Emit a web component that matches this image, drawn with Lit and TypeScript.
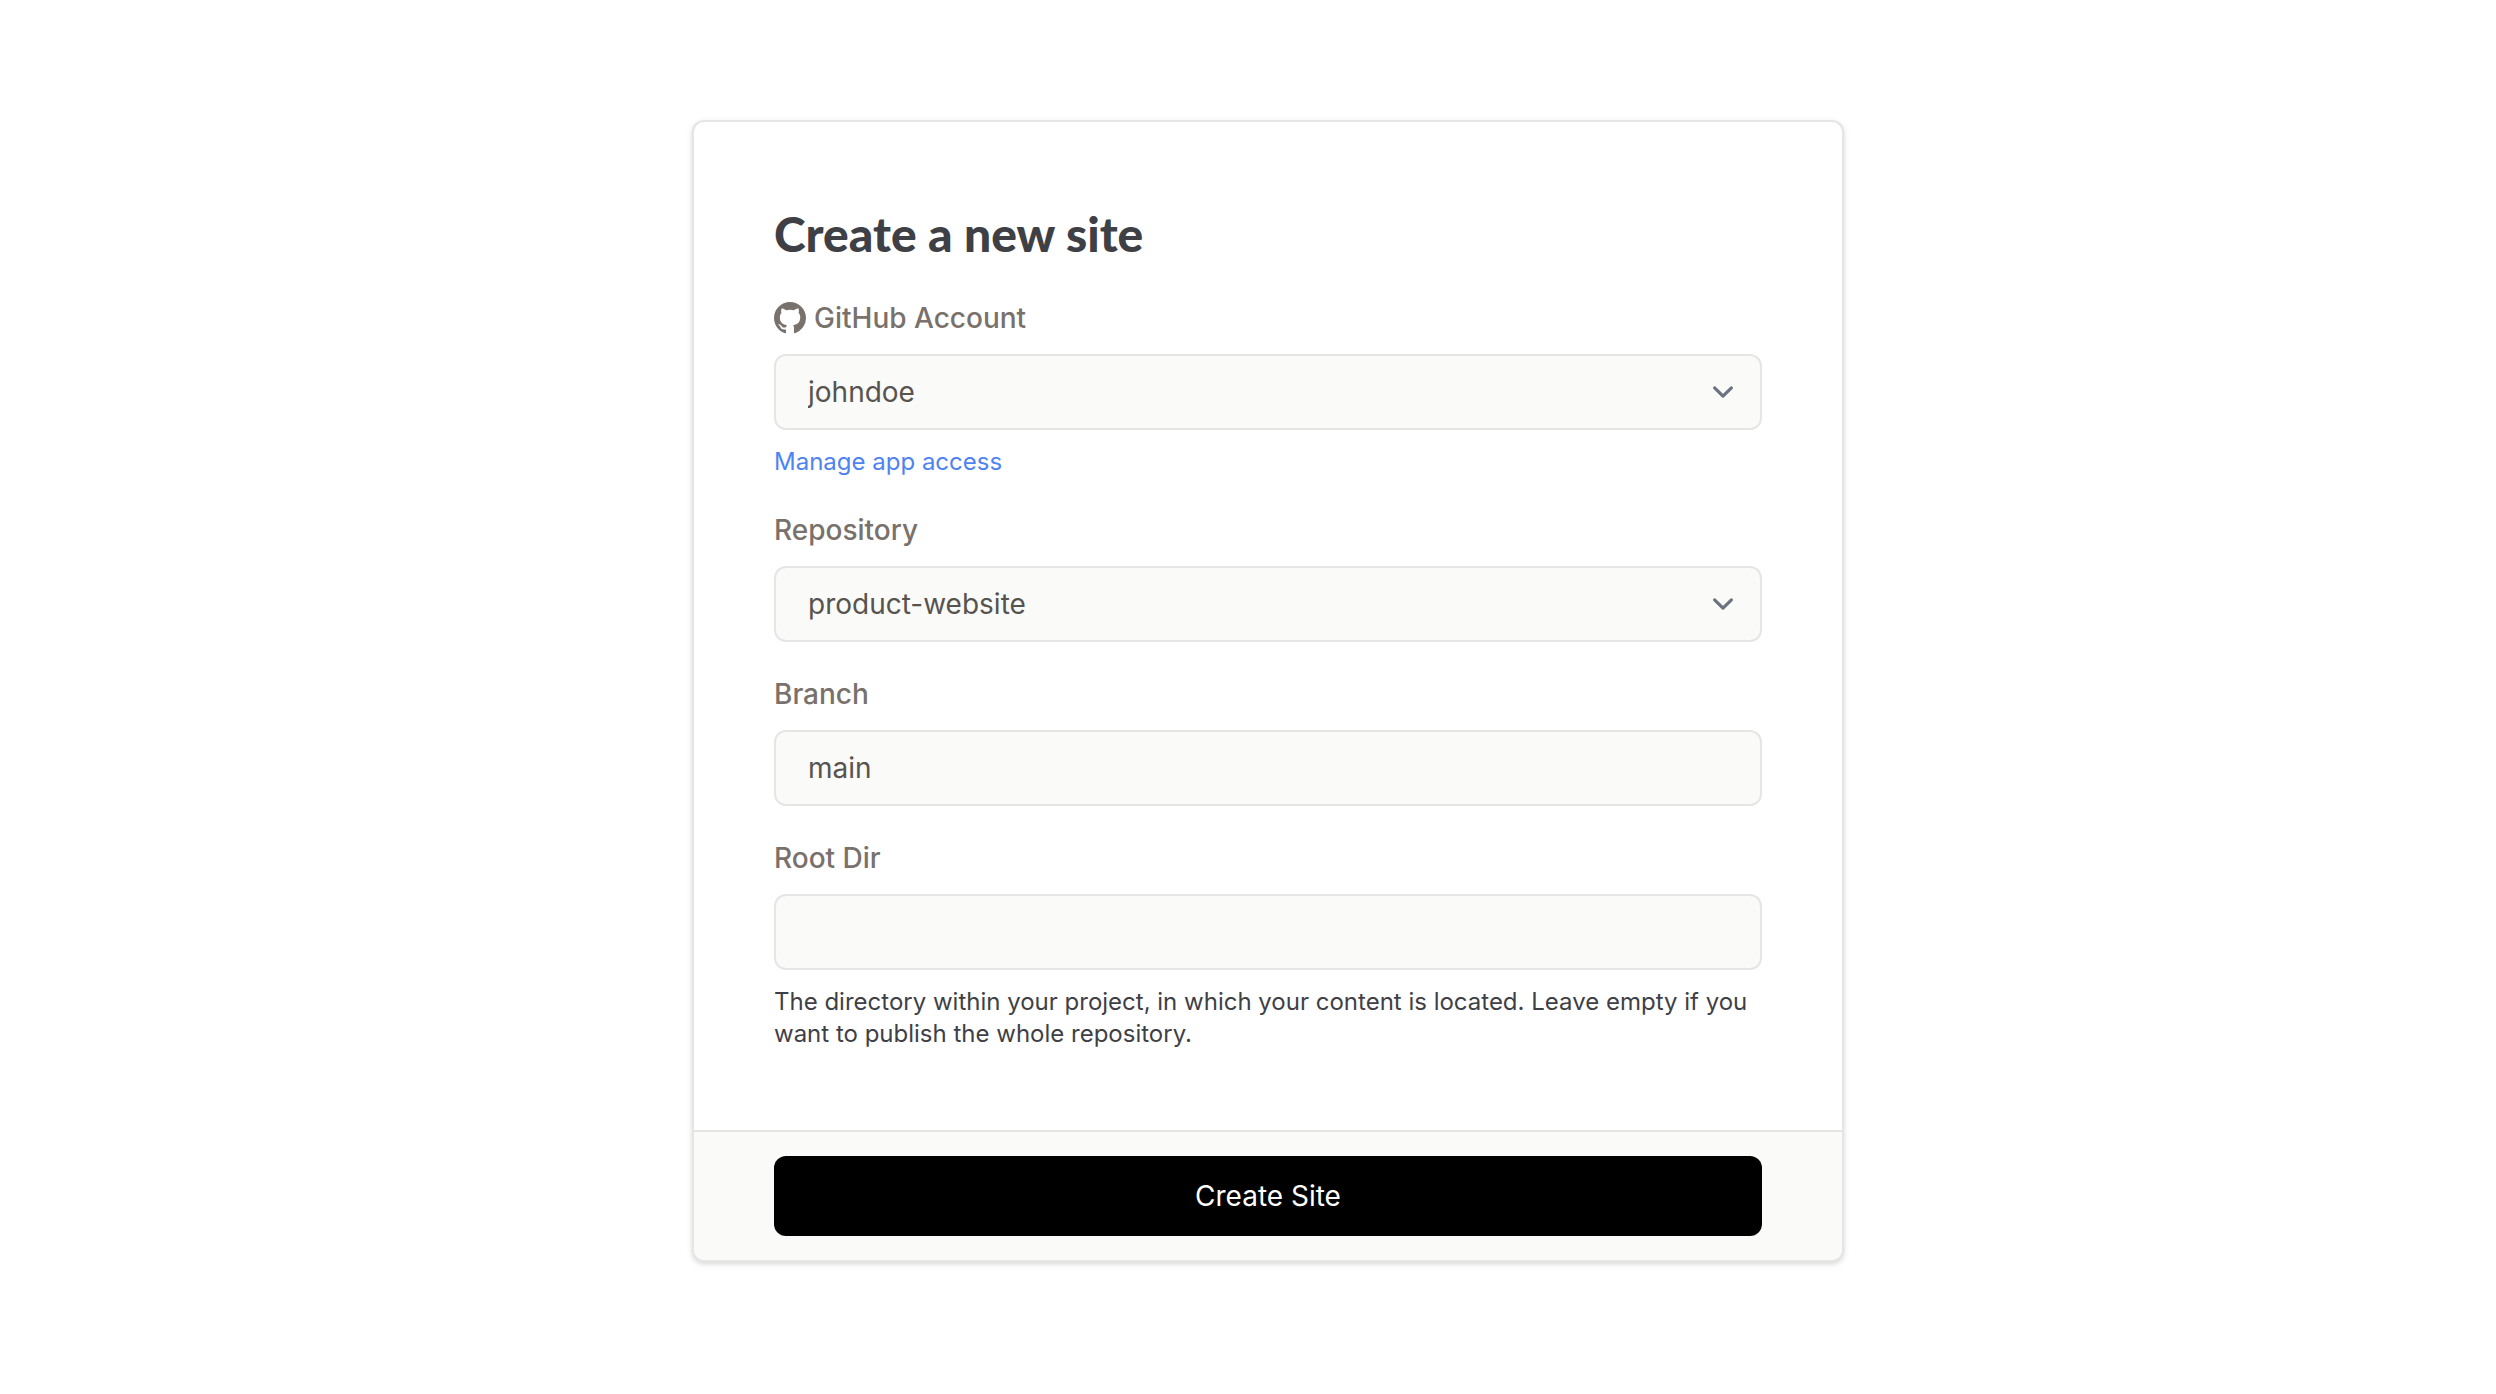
import { LitElement, html, css, svg } from "lit";
import { customElement } from "lit/decorators.js";

const chevron = html`<svg class="chevron" viewBox="0 0 20 20" fill="none" aria-hidden="true">
  ${svg`<path d="M6 8l4 4 4-4" stroke="currentColor" stroke-width="1.5" stroke-linecap="round" stroke-linejoin="round" />`}
</svg>`;

const githubMark = html`<svg class="mark" viewBox="0 0 16 16" fill="currentColor" aria-hidden="true">
  ${svg`<path d="M8 0C3.58 0 0 3.58 0 8c0 3.54 2.29 6.53 5.47 7.59.4.07.55-.17.55-.38 0-.19-.01-.82-.01-1.49-2.01.37-2.53-.49-2.69-.94-.09-.23-.48-.94-.82-1.13-.28-.15-.68-.52-.01-.53.63-.01 1.08.58 1.23.82.72 1.21 1.87.87 2.33.66.07-.52.28-.87.51-1.07-1.78-.2-3.64-.89-3.64-3.95 0-.87.31-1.59.82-2.15-.08-.2-.36-1.02.08-2.12 0 0 .67-.21 2.2.82.64-.18 1.32-.27 2-.27s1.36.09 2 .27c1.53-1.04 2.2-.82 2.2-.82.44 1.1.16 1.92.08 2.12.51.56.82 1.27.82 2.15 0 3.07-1.87 3.75-3.65 3.95.29.25.54.73.54 1.48 0 1.07-.01 1.93-.01 2.2 0 .21.15.46.55.38A8.01 8.01 0 0 0 16 8c0-4.42-3.58-8-8-8z" />`}
</svg>`;

@customElement("app-root")
export class AppRoot extends LitElement {
  static styles = css`
    :host {
      display: block;
      min-height: 100vh;
      box-sizing: border-box;
      padding: 120px 0 120px 40px;
      background: #ffffff;
      color: #3f3f46;
      font-family: Inter, "Liberation Sans", sans-serif;
      font-size: 28px;
      line-height: 40px;
    }
    * {
      box-sizing: border-box;
    }
    .card {
      max-width: 1152px;
      margin: 0 auto;
      border: 2px solid #e5e5e4;
      border-radius: 12px;
      background: #ffffff;
      box-shadow: 0 2px 6px rgba(0, 0, 0, 0.1), 0 2px 4px rgba(0, 0, 0, 0.06);
    }
    .body {
      display: flex;
      flex-direction: column;
      gap: 32px;
      padding: 80px;
    }
    .title {
      margin: 0;
      font-family: Lato, Inter, sans-serif;
      font-size: 48px;
      font-weight: 900;
      line-height: 64px;
    }
    .field {
      display: flex;
      flex-direction: column;
      gap: 16px;
    }
    .label {
      display: flex;
      align-items: center;
      gap: 8px;
      color: #78716c;
      font-weight: 500;
    }
    .mark {
      width: 32px;
      height: 32px;
    }
    .picker {
      display: grid;
      align-items: center;
    }
    .picker > * {
      grid-area: 1 / 1;
    }
    .control {
      appearance: none;
      width: 100%;
      height: 76px;
      margin: 0;
      padding: 0 32px;
      border: 2px solid #e5e5e4;
      border-radius: 12px;
      background: #fafaf9;
      color: #57534e;
      font: inherit;
    }
    .chevron {
      justify-self: end;
      width: 42px;
      height: 42px;
      margin-right: 18px;
      color: #6b7280;
      pointer-events: none;
    }
    .note {
      margin: 0;
      font-size: 24px;
      line-height: 32px;
    }
    .link {
      color: #4f83f1;
      text-decoration: none;
    }
    .footer {
      padding: 24px 80px;
      border-top: 2px solid #e5e5e4;
      border-radius: 0 0 12px 12px;
      background: #fafaf9;
    }
    .submit {
      width: 100%;
      height: 80px;
      border: 0;
      border-radius: 12px;
      background: #000000;
      color: #ffffff;
      font: inherit;
    }
  `;

  render() {
    return html`
      <form class="card" @submit=${(e: Event) => e.preventDefault()}>
        <div class="body">
          <h1 class="title">Create a new site</h1>
          <div class="field">
            <label class="label" for="account">${githubMark}<span>GitHub Account</span></label>
            <div class="picker">
              <select class="control" id="account"><option>johndoe</option></select>
              ${chevron}
            </div>
            <p class="note"><a class="link" href="#access">Manage app access</a></p>
          </div>
          <div class="field">
            <label class="label" for="repository">Repository</label>
            <div class="picker">
              <select class="control" id="repository"><option>product-website</option></select>
              ${chevron}
            </div>
          </div>
          <div class="field">
            <label class="label" for="branch">Branch</label>
            <input class="control" id="branch" type="text" value="main" />
          </div>
          <div class="field">
            <label class="label" for="root-dir">Root Dir</label>
            <input class="control" id="root-dir" type="text" aria-describedby="root-dir-note" />
            <p class="note" id="root-dir-note">
              The directory within your project, in which your content is located. Leave empty if you want to publish the whole repository.
            </p>
          </div>
        </div>
        <div class="footer">
          <button class="submit" type="submit">Create Site</button>
        </div>
      </form>
    `;
  }
}
